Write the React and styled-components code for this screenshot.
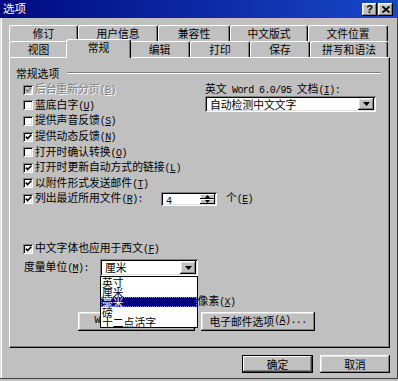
import React from 'react'
import styled, { createGlobalStyle, css } from 'styled-components'

const GlobalStyle = createGlobalStyle`
  html, body { margin:0; padding:0; background:#c0c0c0; }
  body {
    font-family: "Noto Sans CJK SC", "Noto Sans", sans-serif;
    font-size:10.8px;
    color:#000;
  }
  * { box-sizing:border-box; }
`

const raised = css`
  box-shadow: inset -1px -1px #000, inset 1px 1px #fff, inset -2px -2px #808080, inset 2px 2px #dfdfdf;
`
const sunken = css`
  box-shadow: inset 1px 1px #808080, inset -1px -1px #fff, inset 2px 2px #000, inset -2px -2px #dfdfdf;
`

const Window = styled.div`
  width:398px;
  height:381px;
  display:flex;
  flex-direction:column;
  background:#c0c0c0;
`

const TitleBar = styled.div`
  height:18px;
  flex:none;
  display:flex;
  align-items:center;
  justify-content:space-between;
  padding:0 5px 0 3px;
  background:linear-gradient(90deg,#000a80,#1848c8);
  color:#fff;
`
const Title = styled.span`
  font-size:11.5px;
  line-height:1;
`
const TitleButtons = styled.div`
  display:flex;
  gap:1px;
`
const TitleButton = styled.span`
  width:15px;
  height:13px;
  display:flex;
  align-items:center;
  justify-content:center;
  background:#c0c0c0;
  color:#000;
  font:bold 11px "Liberation Sans", sans-serif;
  ${raised}
`

const Body = styled.div`
  flex:1;
  display:flex;
  flex-direction:column;
  padding:7px 8px 0 9px;
  box-shadow: inset 0 -2px #c0c0c0, inset 0 -3px #404040, inset 1px 0 #dfdfdf, inset 2px 0 #fff, inset -1px 0 #404040;
`

const TabRow = styled.div`
  display:flex;
  align-items:flex-start;
  height:16px;
`
const Tab = styled.div`
  width:${p => p.$w}px;
  height:16px;
  flex:none;
  display:flex;
  align-items:center;
  justify-content:center;
  background:#c0c0c0;
  border-top:1px solid #fff;
  border-left:1px solid #fff;
  border-right:1px solid #000;
  box-shadow: inset -1px 0 #808080;
  border-radius:3px 3px 0 0;
  line-height:1;
  ${p => p.$active && css`
    position:relative;
    z-index:2;
    width:${p.$w + 4}px;
    height:19px;
    margin:-2px -2px -1px -2px;
    padding-bottom:3px;
  `}
`

const Panel = styled.div`
  height:291px;
  flex:none;
  display:flex;
  flex-direction:column;
  border-top:1px solid #fff;
  border-left:1px solid #fff;
  border-right:1px solid #000;
  border-bottom:1px solid #000;
  box-shadow: inset -1px -1px #808080;
  padding:8px 8px 0 6px;
`

const GroupHeader = styled.div`
  display:flex;
  align-items:center;
  gap:8px;
  height:14px;
  line-height:1;
`
const Etch = styled.span`
  flex:1;
  height:2px;
  border-top:1px solid #808080;
  border-bottom:1px solid #fff;
`

const TopSection = styled.div`
  display:flex;
  margin-top:2px;
`
const LeftCol = styled.div`
  width:189px;
  flex:none;
  padding-left:7px;
  display:flex;
  flex-direction:column;
`
const RightCol = styled.div`
  flex:1;
  margin-right:5px;
  display:flex;
  flex-direction:column;
`

const CheckRow = styled.div`
  height:15.6px;
  display:flex;
  align-items:center;
  gap:2px;
  line-height:1;
  white-space:nowrap;
  margin-left:${p => p.$indent || 0}px;
  margin-top:${p => p.$top || 0}px;
  color:${p => (p.$disabled ? '#808080' : '#000')};
  text-shadow:${p => (p.$disabled ? '1px 1px #fff' : 'none')};
`
const Box = styled.span`
  width:10px;
  height:10px;
  flex:none;
  display:flex;
  align-items:center;
  justify-content:center;
  background:${p => (p.$disabled ? '#c0c0c0' : '#fff')};
  ${sunken}
`

const Mono = styled.span`
  font-family:"Liberation Mono", "DejaVu Sans Mono", monospace;
  font-size:10px;
  letter-spacing:-0.6px;
`

const SpinRow = styled.div`
  height:15.6px;
  display:grid;
  grid-template-columns:10px 128px 56px auto;
  align-items:center;
  line-height:1;
  white-space:nowrap;
  & > span:nth-child(2) { padding-left:2px; }
  & > span:nth-child(4) { padding-left:9px; }
`
const SpinBox = styled.div`
  width:56px;
  height:14px;
  display:flex;
  padding:2px;
  background:#fff;
  ${sunken}
`
const SpinValue = styled.span`
  flex:1;
  padding-left:3px;
  line-height:10px;
`
const SpinButtons = styled.div`
  width:15px;
  display:flex;
  flex-direction:column;
`
const SpinBtn = styled.span`
  flex:1;
  display:flex;
  align-items:center;
  justify-content:center;
  background:#c0c0c0;
  box-shadow: inset -1px -1px #000, inset 1px 1px #fff;
`

const FieldLabel = styled.div`
  height:12px;
  line-height:12px;
  white-space:nowrap;
`
const SelectBox = styled.div`
  width:${p => p.$w}px;
  height:${p => p.$h}px;
  margin-top:${p => p.$top || 0}px;
  display:flex;
  align-items:stretch;
  padding:2px;
  background:#fff;
  ${sunken}
`
const SelectValue = styled.span`
  flex:1;
  display:flex;
  align-items:center;
  padding-left:3px;
  line-height:1;
  white-space:nowrap;
`
const DropBtn = styled.span`
  width:16px;
  display:flex;
  align-items:center;
  justify-content:center;
  background:#c0c0c0;
  ${raised}
`

const UnitRow = styled.div`
  display:flex;
  align-items:center;
  margin-top:3px;
  padding-left:8px;
  height:17px;
  line-height:1;
`
const UnitLabel = styled.span`
  width:76px;
  white-space:nowrap;
`
const SelectWrap = styled.div`
  position:relative;
`
const DropList = styled.ul`
  position:absolute;
  top:17px;
  left:0;
  z-index:5;
  width:98px;
  margin:0;
  padding:0;
  list-style:none;
  background:#fff;
  border:1px solid #000;
`
const DropItem = styled.li`
  height:10px;
  line-height:10px;
  padding-left:1px;
  white-space:nowrap;
  ${p => p.$selected && css`
    background:#000080;
    color:#fff;
    outline:1px dotted #8080ff;
    outline-offset:-1px;
  `}
`

const ButtonRow = styled.div`
  display:flex;
  gap:6px;
  margin-top:3px;
  padding-left:62px;
`
const PushButton = styled.div`
  width:${p => p.$w}px;
  height:${p => p.$h || 19}px;
  display:flex;
  align-items:center;
  justify-content:center;
  padding-right:${p => p.$shift || 0}px;
  background:#c0c0c0;
  line-height:1;
  white-space:nowrap;
  ${raised}
  ${p => p.$default && css`
    border:1px solid #000;
    box-shadow: inset -1px -1px #404040, inset 1px 1px #fff, inset -2px -2px #808080;
  `}
`
const DialogButtons = styled.div`
  display:flex;
  justify-content:flex-end;
  gap:7px;
  margin-top:7px;
`

const Key = ({ k, colon }) => (
  <Mono>(<u>{k}</u>){colon ? ':' : ''}</Mono>
)

const Check = ({ checked, disabled }) => (
  <Box $disabled={disabled}>
    {checked && (
      <svg width="7" height="6" viewBox="0 0 7 6">
        <polyline points="0.8,2.6 2.6,4.6 6.3,0.8" fill="none" stroke={disabled ? '#808080' : '#000'} strokeWidth="1.6" />
      </svg>
    )}
  </Box>
)

const Arrow = ({ up }) => (
  <svg width="7" height="4" viewBox="0 0 7 4">
    <polygon points={up ? '0,4 7,4 3.5,0' : '0,0 7,0 3.5,4'} fill="#000" />
  </svg>
)

const SmallArrow = ({ up }) => (
  <svg width="5" height="3" viewBox="0 0 5 3">
    <polygon points={up ? '0,3 5,3 2.5,0' : '0,0 5,0 2.5,3'} fill="#000" />
  </svg>
)

const backTabs = [
  { label: '修订', w: 69 },
  { label: '用户信息', w: 80 },
  { label: '兼容性', w: 72 },
  { label: '中文版式', w: 78 },
  { label: '文件位置', w: 80 },
]
const frontTabs = [
  { label: '视图', w: 59 },
  { label: '常规', w: 61, active: true },
  { label: '编辑', w: 61 },
  { label: '打印', w: 60 },
  { label: '保存', w: 60 },
  { label: '拼写和语法', w: 78 },
]

const options = [
  { label: '后台重新分页', k: 'B', checked: true, disabled: true },
  { label: '蓝底白字', k: 'U' },
  { label: '提供声音反馈', k: 'S' },
  { label: '提供动态反馈', k: 'N', checked: true },
  { label: '打开时确认转换', k: 'O' },
  { label: '打开时更新自动方式的链接', k: 'L', checked: true },
  { label: '以附件形式发送邮件', k: 'T', checked: true },
]

const units = ['英寸', '厘米', '毫米', '磅', '十二点活字']

export default function App() {
  return (
    <>
      <GlobalStyle />
      <Window>
        <TitleBar>
          <Title>选项</Title>
          <TitleButtons>
            <TitleButton>?</TitleButton>
            <TitleButton>
              <svg width="8" height="7" viewBox="0 0 8 7">
                <path d="M0.5 0.5 L7.5 6.5 M7.5 0.5 L0.5 6.5" stroke="#000" strokeWidth="1.8" />
              </svg>
            </TitleButton>
          </TitleButtons>
        </TitleBar>
        <Body>
          <TabRow>
            {backTabs.map(t => <Tab key={t.label} $w={t.w}>{t.label}</Tab>)}
          </TabRow>
          <TabRow>
            {frontTabs.map(t => <Tab key={t.label} $w={t.w} $active={t.active}>{t.label}</Tab>)}
          </TabRow>
          <Panel>
            <GroupHeader>
              <span>常规选项</span>
              <Etch />
            </GroupHeader>
            <TopSection>
              <LeftCol>
                {options.map(o => (
                  <CheckRow key={o.k} $disabled={o.disabled}>
                    <Check checked={o.checked} disabled={o.disabled} />
                    <span>{o.label}<Key k={o.k} /></span>
                  </CheckRow>
                ))}
                <SpinRow>
                  <Check checked />
                  <span>列出最近所用文件<Key k="R" colon /></span>
                  <SpinBox>
                    <SpinValue><Mono>4</Mono></SpinValue>
                    <SpinButtons>
                      <SpinBtn><SmallArrow up /></SpinBtn>
                      <SpinBtn><SmallArrow /></SpinBtn>
                    </SpinButtons>
                  </SpinBox>
                  <span>个<Key k="E" /></span>
                </SpinRow>
              </LeftCol>
              <RightCol>
                <FieldLabel>英文<Mono> Word 6.0/95 </Mono>文档<Key k="I" colon /></FieldLabel>
                <SelectBox $w={171} $h={16} $top={2}>
                  <SelectValue>自动检测中文文字</SelectValue>
                  <DropBtn><Arrow /></DropBtn>
                </SelectBox>
              </RightCol>
            </TopSection>
            <CheckRow $indent={7} $top={34}>
              <Check checked />
              <span>中文字体也应用于西文<Key k="F" /></span>
            </CheckRow>
            <UnitRow>
              <UnitLabel>度量单位<Key k="M" colon /></UnitLabel>
              <SelectWrap>
                <SelectBox $w={98} $h={17}>
                  <SelectValue>厘米</SelectValue>
                  <DropBtn><Arrow /></DropBtn>
                </SelectBox>
                <DropList>
                  {units.map(u => (
                    <DropItem key={u} $selected={u === '毫米'}>{u}</DropItem>
                  ))}
                </DropList>
              </SelectWrap>
            </UnitRow>
            <CheckRow $indent={94} $top={17}>
              <Check />
              <span>显示<Mono> HTML </Mono>功能像素<Key k="X" /></span>
            </CheckRow>
            <ButtonRow>
              <PushButton $w={117} $shift={14}><Mono>Web </Mono>选项<Key k="W" /><Mono>...</Mono></PushButton>
              <PushButton $w={114}>电子邮件选项<Key k="A" /><Mono>...</Mono></PushButton>
            </ButtonRow>
          </Panel>
          <DialogButtons>
            <PushButton $w={71} $h={18} $default>确定</PushButton>
            <PushButton $w={70} $h={18}>取消</PushButton>
          </DialogButtons>
        </Body>
      </Window>
    </>
  )
}
